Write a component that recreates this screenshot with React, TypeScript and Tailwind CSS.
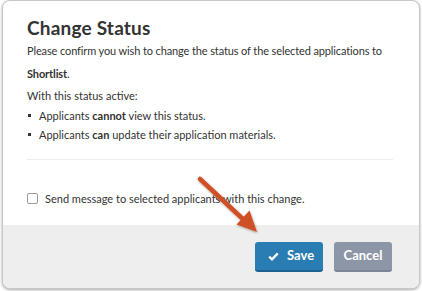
import React from "react";

const bullets = [
  { pre: "Applicants ", bold: "cannot", post: " view this status." },
  { pre: "Applicants ", bold: "can", post: " update their application materials." },
];

// Callout arrow pointing at the Save button
const Arrow = () => (
  <svg
    className="absolute left-0 top-0 pointer-events-none"
    width="422"
    height="291"
    viewBox="0 0 422 291"
  >
    <defs>
      <filter id="sh" x="-20%" y="-20%" width="140%" height="140%">
        <feDropShadow dx="0.5" dy="1" stdDeviation="0.8" floodColor="#000" floodOpacity="0.35" />
      </filter>
    </defs>
    <g filter="url(#sh)">
      <line x1="200" y1="179" x2="245" y2="221" stroke="#cf4f26" strokeWidth="4.5" strokeLinecap="round" />
      <polygon points="257,232 236.5,224.5 249.5,210.5" fill="#cf4f26" />
    </g>
  </svg>
);

export default function App() {
  return (
    <div className="relative w-[422px] h-[291px] bg-white font-['Lato','Open_Sans',sans-serif] text-[#333]">
      <div className="ml-[2px] w-[418px] h-[289px] flex flex-col border border-[#c8c8c8] rounded-lg shadow-[0_1px_3px_rgba(0,0,0,0.35)] overflow-hidden bg-white">
        <div className="flex-1 pl-6 pr-[26px] pt-[14px]">
          <h2 className="text-[19px] leading-[25px] font-bold text-[#333] tracking-[0.2px]">Change Status</h2>
          <p className="mt-0 text-[11px] leading-[22.5px] tracking-[-0.12px]">
            Please confirm you wish to change the status of the selected applications to{" "}
            <span className="font-bold">Shortlist</span>.
          </p>
          <p className="text-[11px] leading-[21.5px]">With this status active:</p>
          <ul className="mt-[-1px] text-[11px] leading-[19.5px]">
            {bullets.map((b, i) => (
              <li key={i} className="flex items-center">
                <span className="w-[3px] h-[3px] bg-[#333] ml-[1px] mr-[8px]" />
                <span>
                  {b.pre}
                  <span className="font-bold">{b.bold}</span>
                  {b.post}
                </span>
              </li>
            ))}
          </ul>
          <div className="mt-[14px] h-px bg-[#ececec]" />
          <label className="mt-[29px] flex items-center text-[11px] leading-[20px]">
            <span className="w-[11px] h-[11px] border border-[#9a9a9a] rounded-[2px] bg-white mr-[7px]" />
            Send message to selected applicants with this change.
          </label>
        </div>
        <div className="h-[63px] bg-[#eeeeee] flex justify-end items-start pt-[17px] pr-[27px] gap-[11px]">
          <button className="w-[68px] h-[30px] flex items-center pl-[13px] rounded-[3px] bg-[#2a7db3] border-b-2 border-[#1d6190] text-white text-[13px] font-bold">
            <svg width="11" height="9" viewBox="0 0 11 9" className="mr-[8px]">
              <path d="M1.2 4.6 L4 7.3 L9.8 1.4" fill="none" stroke="#fff" strokeWidth="2.3" strokeLinejoin="miter" />
            </svg>
            Save
          </button>
          <button className="w-[58px] h-[30px] flex items-center justify-center rounded-[3px] bg-[#8d96a7] border-b-2 border-[#7c8596] text-white text-[13px] font-bold">
            Cancel
          </button>
        </div>
      </div>
      <Arrow />
    </div>
  );
}
